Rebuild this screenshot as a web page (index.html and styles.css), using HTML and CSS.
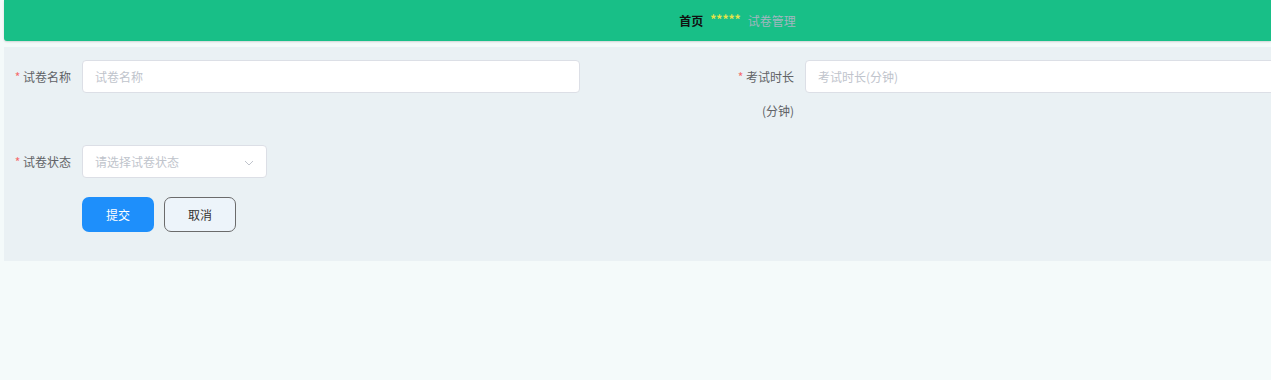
FILE: index.html
```
<!DOCTYPE html>
<html>
<head>
    <title>试卷管理</title>
    <link rel="stylesheet" href="styles.css">
</head>
<body>
    <header class="topbar">
        <div class="crumbs">
            <span class="crumb-home">首页</span>
            <span class="crumb-sep">*****</span>
            <span class="crumb-current">试卷管理</span>
        </div>
    </header>
    <div class="main">
        <form class="paper-form">
            <div class="form-row">
                <div class="form-item item-name">
                    <label class="form-label"><span class="req">*</span> 试卷名称</label>
                    <input class="form-input input-name" type="text" placeholder="试卷名称">
                </div>
                <div class="form-item item-time">
                    <label class="form-label"><span class="req">*</span> 考试时长(分钟)</label>
                    <input class="form-input input-time" type="text" placeholder="考试时长(分钟)">
                </div>
            </div>
            <div class="form-row">
                <div class="form-item">
                    <label class="form-label"><span class="req">*</span> 试卷状态</label>
                    <div class="form-select">
                        <span class="select-placeholder">请选择试卷状态</span>
                        <svg class="select-arrow" width="10" height="6" viewBox="0 0 10 6">
                            <path d="M1 1 L5 5 L9 1" fill="none" stroke="#c0c4cc" stroke-width="1"/>
                        </svg>
                    </div>
                </div>
            </div>
            <div class="form-actions">
                <button class="btn btn-primary" type="button">提交</button>
                <button class="btn btn-cancel" type="button">取消</button>
            </div>
        </form>
    </div>
</body>
</html>
```
FILE: styles.css
```
html, body {
    margin: 0;
    padding: 0;
    overflow: hidden;
}
body {
    font-family: "Noto Sans CJK SC", "Liberation Sans", sans-serif;
    background-color: #f4fafa;
    width: 1271px;
    height: 380px;
}
.topbar {
    margin-left: 4px;
    height: 41px;
    background-color: #18bf87;
    border-bottom-left-radius: 3px;
    box-shadow: 0 1px 2px rgba(0, 0, 0, 0.15);
    display: flex;
    align-items: center;
    justify-content: center;
    padding-left: 200px;
}
.crumbs {
    font-size: 12px;
    display: flex;
    align-items: center;
    gap: 7px;
}
.crumb-home {
    color: #111;
    font-weight: bold;
}
.crumb-sep {
    color: #e6e34a;
    font-size: 12px;
    font-weight: bold;
    margin-top: -4px;
}
.crumb-current {
    color: #a2b6bf;
}
.main {
    margin: 6px 0 0 4px;
    background-color: #eaf1f4;
    padding: 13px 0 29px 0;
}
.form-row {
    display: flex;
    margin-bottom: 17px;
}
.form-item {
    display: flex;
    align-items: flex-start;
    flex-shrink: 0;
}
.item-name {
    width: 723px;
}
.form-label {
    flex-shrink: 0;
    width: 67px;
    padding-right: 11px;
    text-align: right;
    font-size: 12px;
    line-height: 34px;
    color: #606266;
}
.req {
    color: #f56c6c;
}
.form-input {
    flex-shrink: 0;
    box-sizing: border-box;
    height: 33px;
    border: 1px solid #dcdfe6;
    border-radius: 4px;
    background-color: #fff;
    padding: 0 12px;
    font-family: inherit;
    font-size: 12px;
    color: #606266;
    outline: none;
}
.form-input::placeholder {
    color: #c0c4cc;
}
.input-name {
    width: 498px;
}
.input-time {
    width: 498px;
}
.form-select {
    box-sizing: border-box;
    width: 185px;
    height: 33px;
    border: 1px solid #dcdfe6;
    border-radius: 4px;
    background-color: #fff;
    padding: 0 12px;
    display: flex;
    align-items: center;
    justify-content: space-between;
}
.select-placeholder {
    font-size: 12px;
    color: #c0c4cc;
}
.select-arrow {
    margin-top: 3px;
}
.form-actions {
    display: flex;
    gap: 10px;
    padding-left: 78px;
    margin-top: 18px;
}
.btn {
    box-sizing: border-box;
    width: 72px;
    height: 35px;
    border-radius: 7px;
    font-family: inherit;
    font-size: 12px;
    cursor: pointer;
}
.btn-primary {
    background-color: #1e8ffb;
    color: #fff;
    border: none;
}
.btn-cancel {
    background-color: #edf4fa;
    color: #333;
    border: 1px solid #6b6b6b;
}
```
